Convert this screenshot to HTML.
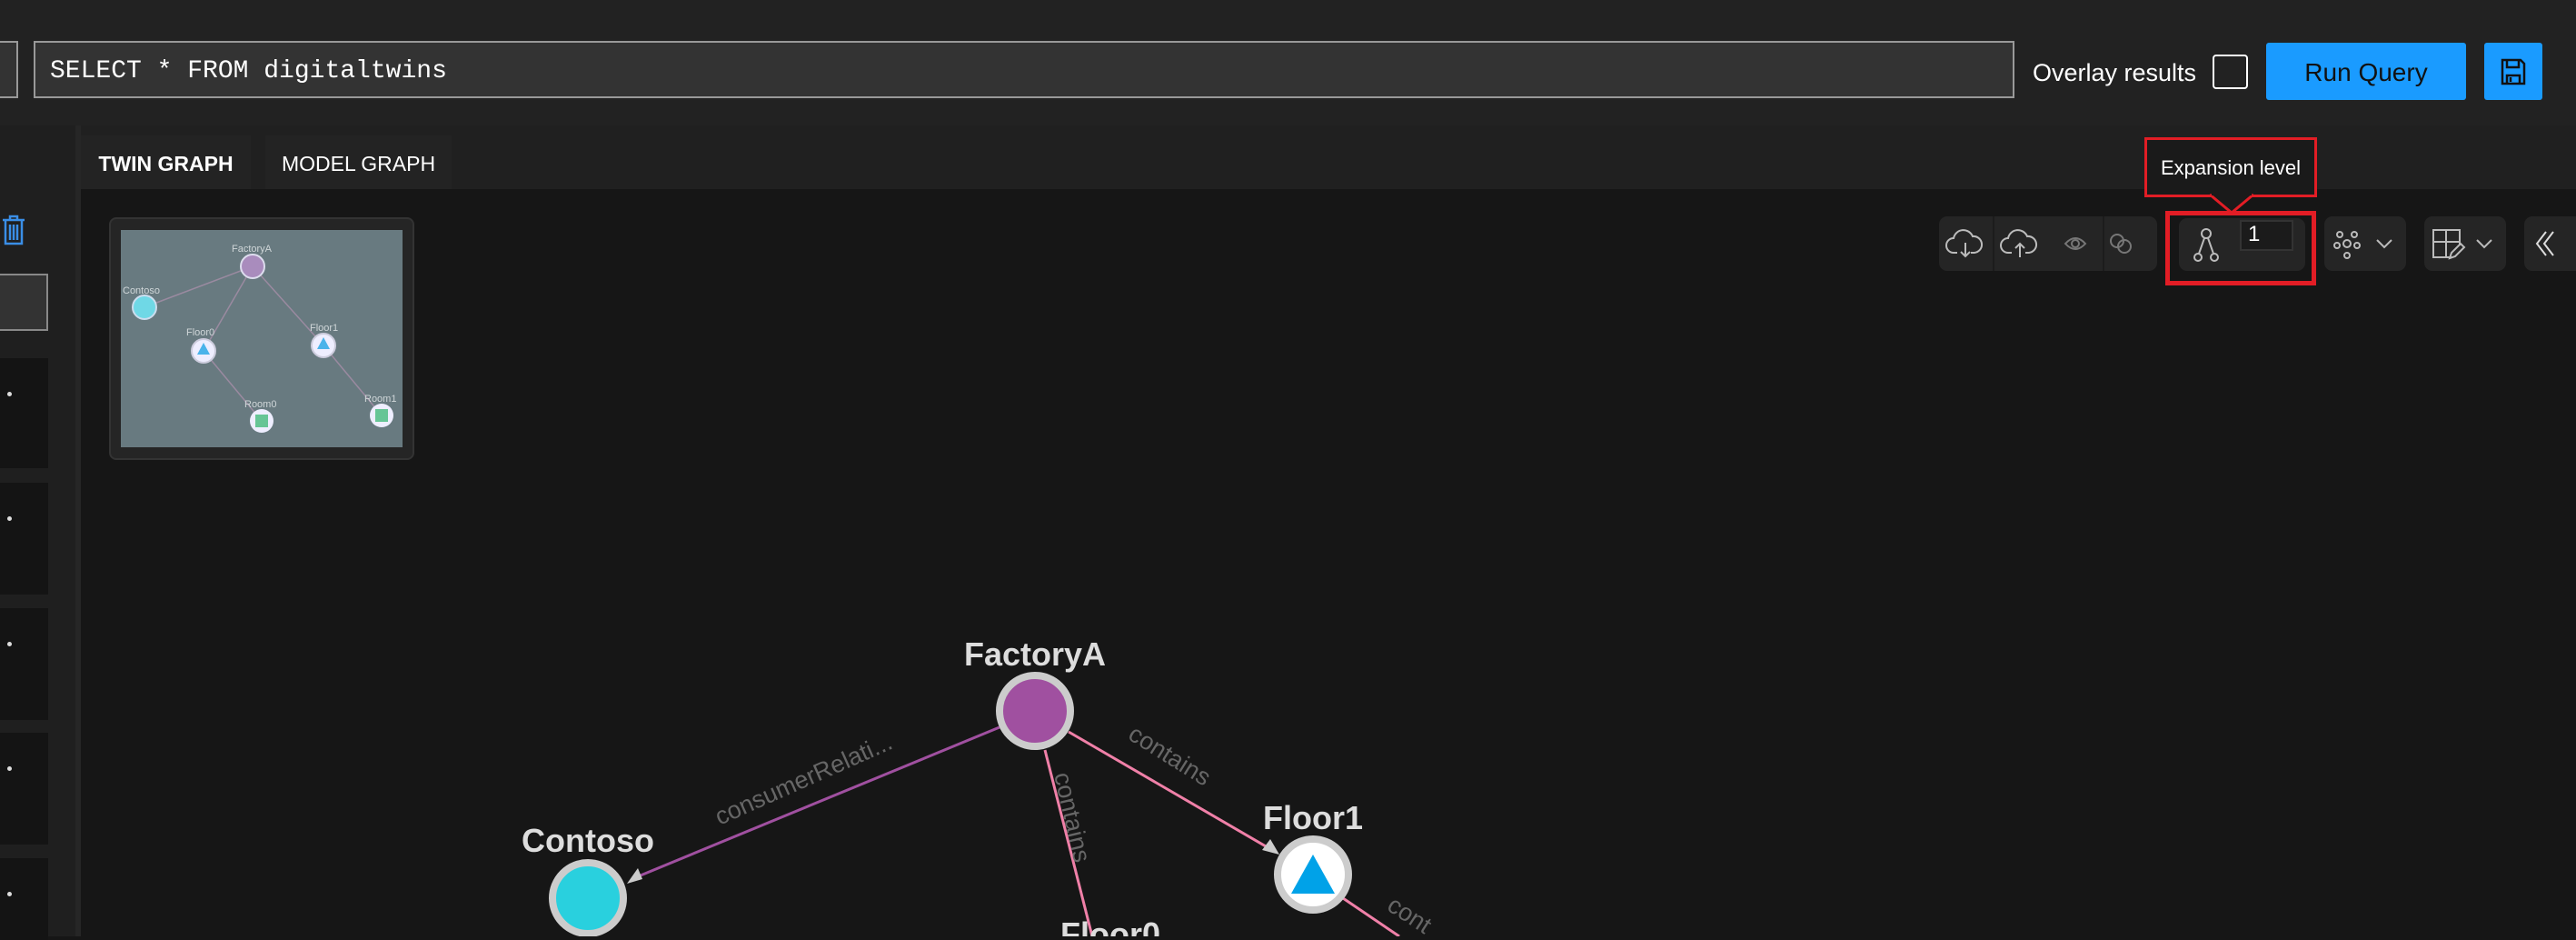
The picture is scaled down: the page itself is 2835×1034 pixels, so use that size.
<!DOCTYPE html>
<html><head><meta charset="utf-8"><style>
*{margin:0;padding:0;box-sizing:border-box}
body{width:2835px;height:1030px;overflow:hidden;background:#161616;font-family:"Liberation Sans",sans-serif;position:relative}
.a{position:absolute}
</style></head><body>
<div class="a" style="left:0;top:0;width:2835px;height:138px;background:#222"></div>
<div class="a" style="left:-4px;top:45px;width:24px;height:63px;background:#333;border:2px solid #999"></div>
<div class="a" style="left:37px;top:45px;width:2180px;height:63px;background:#333;border:2px solid #999"></div>
<div class="a" style="left:55px;top:63px;font:28px 'Liberation Mono',monospace;color:#fff">SELECT * FROM digitaltwins</div>
<div class="a" style="left:2237px;top:65px;font-size:27px;color:#fff">Overlay results</div>
<div class="a" style="left:2435px;top:60px;width:39px;height:38px;border:2px solid #fff;border-radius:4px"></div>
<div class="a" style="left:2494px;top:47px;width:220px;height:63px;background:#1a9bff;border-radius:3px;color:#111;font-size:28px;text-align:center;line-height:66px">Run Query</div>
<div class="a" style="left:2734px;top:47px;width:64px;height:63px;background:#1a9bff;border-radius:3px"></div>
<svg class="a" style="left:2752px;top:64px" width="28" height="30" viewBox="0 0 28 30" fill="none" stroke="#111" stroke-width="2.5"><path d="M2 2h20l4 4v22H2z M7 2v8h13V2 M7 28v-9h14v9 M11 21v5"/></svg>
<div class="a" style="left:0;top:138px;width:2835px;height:70px;background:#202020"></div>
<div class="a" style="left:0;top:138px;width:83px;height:892px;background:#1f1f1f"></div>
<div class="a" style="left:83px;top:138px;width:6px;height:892px;background:#262626"></div>
<div class="a" style="left:89px;top:149px;width:187px;height:59px;background:#232323;color:#fff;font-size:23px;font-weight:bold;text-align:center;line-height:62px">TWIN GRAPH</div>
<div class="a" style="left:292px;top:149px;width:205px;height:59px;background:#232323;color:#fff;font-size:23px;text-align:center;line-height:62px">MODEL GRAPH</div>
<svg class="a" style="left:2px;top:236px" width="26" height="34" viewBox="0 0 26 34" fill="none" stroke="#3a8ee6" stroke-width="2.5"><path d="M1 6h24 M9 6V2h8v4 M4 6v26h18V6 M9 11v17 M13 11v17 M17 11v17"/></svg>
<div class="a" style="left:-4px;top:301px;width:57px;height:63px;background:#333;border:2px solid #888"></div>
<div class="a" style="left:0;top:394px;width:53px;height:121px;background:#141414"></div>
<div class="a" style="left:0;top:531px;width:53px;height:123px;background:#141414"></div>
<div class="a" style="left:0;top:669px;width:53px;height:123px;background:#141414"></div>
<div class="a" style="left:0;top:806px;width:53px;height:123px;background:#141414"></div>
<div class="a" style="left:0;top:944px;width:53px;height:90px;background:#141414"></div>
<div class="a" style="left:8px;top:431px;width:5px;height:5px;border-radius:50%;background:#ddd"></div>
<div class="a" style="left:8px;top:568px;width:5px;height:5px;border-radius:50%;background:#ddd"></div>
<div class="a" style="left:8px;top:706px;width:5px;height:5px;border-radius:50%;background:#ddd"></div>
<div class="a" style="left:8px;top:843px;width:5px;height:5px;border-radius:50%;background:#ddd"></div>
<div class="a" style="left:8px;top:981px;width:5px;height:5px;border-radius:50%;background:#ddd"></div>
<!-- minimap -->
<div class="a" style="left:120px;top:239px;width:336px;height:267px;background:#252525;border:2px solid #333;border-radius:8px"></div>
<svg class="a" style="left:133px;top:253px" width="310" height="239" viewBox="0 0 310 239">
<rect width="310" height="239" fill="#687a80"/>
<g stroke="#9a8aa0" stroke-width="1.5"><line x1="145" y1="40" x2="26" y2="85"/><line x1="145" y1="40" x2="91" y2="133"/><line x1="145" y1="40" x2="223" y2="127"/><line x1="91" y1="133" x2="155" y2="210"/><line x1="223" y1="127" x2="287" y2="204"/></g>
<g font-size="11" fill="#cfd6d8" font-family="Liberation Sans"><text x="122" y="24">FactoryA</text><text x="2" y="70">Contoso</text><text x="72" y="116">Floor0</text><text x="208" y="111">Floor1</text><text x="136" y="195">Room0</text><text x="268" y="189">Room1</text></g>
<circle cx="145" cy="40" r="13" fill="#a98cbd" stroke="#dde" stroke-width="2"/>
<circle cx="26" cy="85" r="13" fill="#6fd8e6" stroke="#cde" stroke-width="2"/>
<circle cx="91" cy="133" r="13" fill="#eef" stroke="#ccd" stroke-width="2"/><path d="M91 124l7 13h-14z" fill="#4ab3ea"/>
<circle cx="223" cy="127" r="13" fill="#eef" stroke="#ccd" stroke-width="2"/><path d="M223 118l7 13h-14z" fill="#4ab3ea"/>
<circle cx="155" cy="210" r="13" fill="#eef"/><rect x="148" y="203" width="14" height="14" fill="#66c596"/>
<circle cx="287" cy="204" r="13" fill="#eef"/><rect x="280" y="197" width="14" height="14" fill="#66c596"/>
</svg>
<!-- graph -->
<svg class="a" style="left:0;top:0" width="2835" height="1030" viewBox="0 0 2835 1030">
<g stroke-width="3"><line x1="1100" y1="800" x2="700" y2="965" stroke="#a050a0"/><line x1="1176" y1="805" x2="1400" y2="935" stroke="#f080a8"/><line x1="1150" y1="825" x2="1202" y2="1030" stroke="#f080a8"/><line x1="1478" y1="988" x2="1540" y2="1030" stroke="#f080a8"/></g>
<path d="M690 972l12-17 5 12z" fill="#ccc"/><path d="M1408 940l-19-5 9-12z" fill="#ccc"/>
<g fill="#666" font-size="27" font-family="Liberation Sans"><text transform="translate(792 908) rotate(-24)">consumerRelati...</text><text transform="translate(1240 812) rotate(32)">contains</text><text transform="translate(1160 852) rotate(77)">contains</text><text transform="translate(1525 1000) rotate(33)">cont</text></g>
<circle cx="1139" cy="782" r="39" fill="#a050a0" stroke="#ccc" stroke-width="8"/>
<circle cx="647" cy="988" r="39" fill="#29d0de" stroke="#ccc" stroke-width="8"/>
<circle cx="1445" cy="962" r="39" fill="#fff" stroke="#ccc" stroke-width="8"/>
<path d="M1445 940l24 43h-48z" fill="#00a2e8"/>
<g fill="#ddd" font-size="36" font-weight="bold" text-anchor="middle" font-family="Liberation Sans"><text x="1139" y="732">FactoryA</text><text x="647" y="937">Contoso</text><text x="1445" y="912">Floor1</text><text x="1222" y="1040">Floor0</text></g>
</svg>
<!-- toolbar -->
<div class="a" style="left:2134px;top:238px;width:240px;height:60px;background:#252525;border-radius:9px"></div>
<div class="a" style="left:2193px;top:238px;width:2px;height:60px;background:#1c1c1c"></div>
<div class="a" style="left:2314px;top:238px;width:2px;height:60px;background:#1c1c1c"></div>
<svg class="a" style="left:2134px;top:238px" width="240" height="60" viewBox="0 0 240 60" fill="none" stroke-width="2"><g stroke="#bbb"><path d="M20 40h-4a8 8 0 0 1 0-16a11 11 0 0 1 21-2a8 8 0 0 1 2 18h-4 M29 29v15 M24 39l5 5 5-5"/><path d="M80 40h-4a8 8 0 0 1 0-16a11 11 0 0 1 21-2a8 8 0 0 1 2 18h-4 M89 45v-15 M84 35l5-5 5 5"/></g><g stroke="#777"><path d="M139 30q11-12 22 0q-11 12-22 0z"/><circle cx="150" cy="30" r="4"/><circle cx="196" cy="27" r="7"/><circle cx="204" cy="33" r="7"/></g></svg>
<div class="a" style="left:2383px;top:232px;width:166px;height:82px;border:5px solid #e21d25"></div>
<div class="a" style="left:2398px;top:240px;width:139px;height:58px;background:#252525;border-radius:9px"></div>
<svg class="a" style="left:2413px;top:250px" width="30" height="40" viewBox="0 0 30 40" fill="none" stroke="#bbb" stroke-width="2"><circle cx="15" cy="7" r="5"/><circle cx="6" cy="33" r="4"/><circle cx="24" cy="33" r="4"/><path d="M13 12l-6 17 M17 12l6 17"/></svg>
<div class="a" style="left:2465px;top:242px;width:59px;height:34px;background:#1b1b1b;border:2px solid #333;color:#fff;font-size:24px;padding-left:7px;line-height:28px">1</div>
<div class="a" style="left:2558px;top:238px;width:90px;height:60px;background:#252525;border-radius:9px"></div>
<svg class="a" style="left:2558px;top:238px" width="90" height="60" viewBox="0 0 90 60" fill="none" stroke="#bbb" stroke-width="2"><circle cx="25" cy="30" r="4"/><circle cx="17" cy="20" r="3"/><circle cx="33" cy="20" r="3"/><circle cx="14" cy="32" r="3"/><circle cx="36" cy="32" r="3"/><circle cx="25" cy="43" r="3"/><path d="M58 26l8 8 8-8"/></svg>
<div class="a" style="left:2668px;top:238px;width:90px;height:60px;background:#252525;border-radius:9px"></div>
<svg class="a" style="left:2668px;top:238px" width="90" height="60" viewBox="0 0 90 60" fill="none" stroke="#bbb" stroke-width="2"><path d="M28 45H10V15h29v17 M10 28h29 M24 15v30 M28 46l2-6 10-10 4 4-10 10z"/><path d="M58 26l8 8 8-8"/></svg>
<div class="a" style="left:2778px;top:238px;width:70px;height:60px;background:#252525;border-radius:9px"></div>
<svg class="a" style="left:2788px;top:252px" width="30" height="32" viewBox="0 0 30 32" fill="none" stroke="#ddd" stroke-width="2"><path d="M14 3L4 16l10 13 M22 3L12 16l10 13"/></svg>
<!-- tooltip -->
<div class="a" style="left:2360px;top:151px;width:190px;height:66px;background:#1a1a1a;border:3px solid #e21d25;color:#fff;font-size:22px;text-align:center;line-height:62px">Expansion level</div>
<svg class="a" style="left:2430px;top:213px" width="52" height="22" viewBox="0 0 52 22"><path d="M2 1l24 20 24-20" fill="#1a1a1a" stroke="#e21d25" stroke-width="3"/><rect x="4" y="0" width="44" height="2" fill="#1a1a1a"/></svg>
</body></html>
